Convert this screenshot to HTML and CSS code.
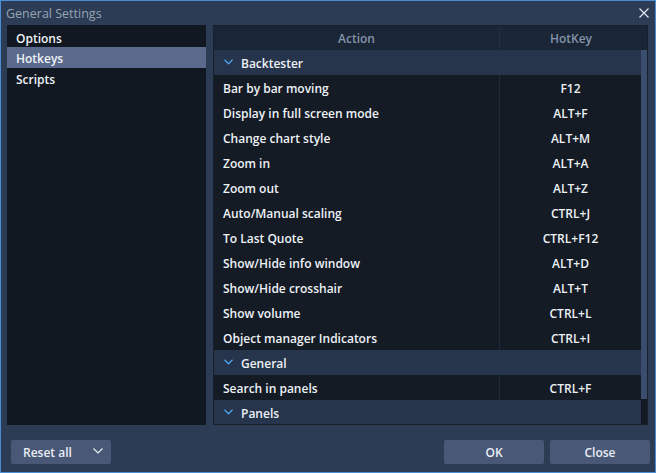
FILE: index.html
```html
<!DOCTYPE html>
<html>
<head>
<meta charset="utf-8">
<link rel="stylesheet" href="styles.css">
</head>
<body>
<div class="window">
  <div class="titlebar">
    <span class="title">General Settings</span>
    <svg class="close-x" width="10" height="10" viewBox="0 0 10 10"><path d="M0.5 0.5 L9.5 9.5 M9.5 0.5 L0.5 9.5" stroke="#e6ecf3" stroke-width="1.1" fill="none"/></svg>
  </div>
  <div class="main">
    <div class="sidebar">
      <div class="nav-item">Options</div>
      <div class="nav-item active">Hotkeys</div>
      <div class="nav-item">Scripts</div>
    </div>
    <div class="table">
      <div class="thead">
        <div class="col-action">Action</div>
        <div class="col-key">HotKey</div>
      </div>
      <div class="tbody">
        <div class="rows">
          <div class="group"><svg class="chev" width="9" height="6" viewBox="0 0 9 6"><path d="M0.5 0.8 L4.5 4.8 L8.5 0.8" stroke="#4da3ec" stroke-width="1.3" fill="none"/></svg>Backtester</div>
          <div class="row"><div class="c-action">Bar by bar moving</div><div class="c-key">F12</div></div>
          <div class="row"><div class="c-action">Display in full screen mode</div><div class="c-key">ALT+F</div></div>
          <div class="row"><div class="c-action">Change chart style</div><div class="c-key">ALT+M</div></div>
          <div class="row"><div class="c-action">Zoom in</div><div class="c-key">ALT+A</div></div>
          <div class="row"><div class="c-action">Zoom out</div><div class="c-key">ALT+Z</div></div>
          <div class="row"><div class="c-action">Auto/Manual scaling</div><div class="c-key">CTRL+J</div></div>
          <div class="row"><div class="c-action">To Last Quote</div><div class="c-key">CTRL+F12</div></div>
          <div class="row"><div class="c-action">Show/Hide info window</div><div class="c-key">ALT+D</div></div>
          <div class="row"><div class="c-action">Show/Hide crosshair</div><div class="c-key">ALT+T</div></div>
          <div class="row"><div class="c-action">Show volume</div><div class="c-key">CTRL+L</div></div>
          <div class="row"><div class="c-action">Object manager Indicators</div><div class="c-key">CTRL+I</div></div>
          <div class="group"><svg class="chev" width="9" height="6" viewBox="0 0 9 6"><path d="M0.5 0.8 L4.5 4.8 L8.5 0.8" stroke="#4da3ec" stroke-width="1.3" fill="none"/></svg>General</div>
          <div class="row"><div class="c-action">Search in panels</div><div class="c-key">CTRL+F</div></div>
          <div class="group"><svg class="chev" width="9" height="6" viewBox="0 0 9 6"><path d="M0.5 0.8 L4.5 4.8 L8.5 0.8" stroke="#4da3ec" stroke-width="1.3" fill="none"/></svg>Panels</div>
        </div>
        <div class="scrollbar"><div class="thumb"></div></div>
      </div>
    </div>
  </div>
  <div class="footer">
    <button class="btn reset">Reset all<svg class="btn-chev" width="10" height="6" viewBox="0 0 10 6"><path d="M0.5 0.5 L5 5 L9.5 0.5" stroke="#e6ecf3" stroke-width="1.2" fill="none"/></svg></button>
    <div class="spacer"></div>
    <button class="btn">OK</button>
    <button class="btn">Close</button>
  </div>
</div>
</body>
</html>
```

FILE: styles.css
```css
html, body {
  margin: 0;
  padding: 0;
  background: #2b3c54;
}
body {
  font-family: "Open Sans", "DejaVu Sans", sans-serif;
  font-size: 12px;
  color: #e9eef5;
}
.window {
  width: 656px;
  height: 473px;
  box-sizing: border-box;
  border: 1px solid #4a8ed6;
  background: #2b3c54;
  display: flex;
  flex-direction: column;
}
.titlebar {
  height: 24px;
  display: flex;
  align-items: center;
  justify-content: space-between;
  padding: 0 6px 0 5px;
  flex: none;
}
.title {
  color: #97a3b3;
  font-size: 12.5px;
  margin-top: 1px;
}
.close-x {
  margin-top: 0;
}
.main {
  height: 400px;
  display: flex;
  padding: 0 6px;
  gap: 7px;
  flex: none;
}
.sidebar {
  width: 199px;
  background: #111821;
  padding-top: 1px;
  box-sizing: border-box;
}
.nav-item {
  height: 21px;
  line-height: 21px;
  padding-left: 9px;
  padding-top: 1px;
  box-sizing: border-box;
  font-weight: 600;
  color: #eef2f7;
}
.nav-item:first-child {
  padding-top: 2px;
}
.nav-item.active {
  background: #5a6a8c;
}
.table {
  width: 435px;
  box-sizing: border-box;
  border: 1px solid #17202c;
  display: flex;
  flex-direction: column;
}
.thead {
  height: 24px;
  display: flex;
  background: #1a2535;
  color: #8494aa;
  font-weight: 600;
  flex: none;
}
.thead .col-action {
  width: 285px;
  text-align: center;
  line-height: 26px;
  border-right: 1px solid #223047;
}
.thead .col-key {
  flex: 1;
  text-align: center;
  line-height: 26px;
  padding-right: 5px;
}
.tbody {
  flex: 1;
  display: flex;
  overflow: hidden;
  background: #141b25;
}
.rows {
  flex: 1;
  overflow: hidden;
}
.group {
  height: 25px;
  background: #26354b;
  display: flex;
  align-items: center;
  font-weight: 600;
  color: #eef2f7;
  padding-top: 2px;
  box-sizing: border-box;
}
.chev {
  margin-left: 10px;
  margin-right: 8px;
  margin-top: -3px;
}
.row {
  height: 25px;
  display: flex;
  background: #141b25;
  font-weight: 600;
  color: #eef2f7;
}
.c-action {
  width: 276px;
  padding-left: 9px;
  line-height: 27px;
  border-right: 1px solid #1f2a3a;
}
.c-key {
  flex: 1;
  text-align: center;
  line-height: 27px;
}
.scrollbar {
  width: 6px;
  background: #121923;
  flex: none;
}
.thumb {
  height: 349px;
  background: #3a4d6e;
}
.footer {
  flex: 1;
  display: flex;
  align-items: flex-start;
  padding: 15px 5px 0 10px;
  gap: 6px;
}
.spacer {
  flex: 1;
}
.btn {
  width: 100px;
  height: 24px;
  border: none;
  border-radius: 2px;
  background: #4a5877;
  color: #e9eef5;
  font-family: "Open Sans", "DejaVu Sans", sans-serif;
  font-size: 12px;
  font-weight: 600;
  padding: 0;
}
.btn.reset {
  display: flex;
  align-items: center;
  justify-content: space-between;
  padding: 0 8px 0 12px;
}
.btn-chev {
  margin-top: -3px;
}
```
